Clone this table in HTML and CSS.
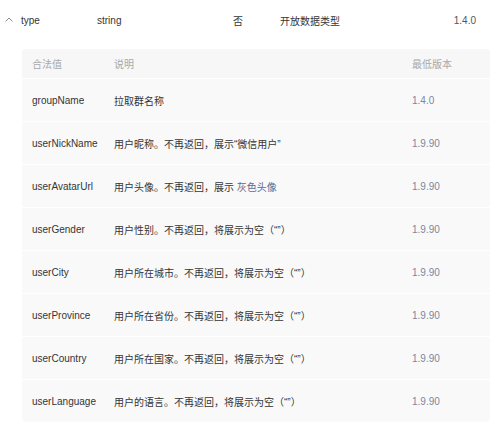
FILE: index.html
```html
<!DOCTYPE html>
<html lang="zh">
<head>
<meta charset="utf-8">
<link rel="stylesheet" href="styles.css">
</head>
<body>
<div class="field">
  <span class="chev"><svg width="8" height="5" viewBox="0 0 8 5"><path d="M0.5 4.5 L4 1 L7.5 4.5" fill="none" stroke="#8a8a8a" stroke-width="1"/></svg></span>
  <span class="name">type</span>
  <span class="ftype">string</span>
  <span class="req">否</span>
  <span class="fdesc">开放数据类型</span>
  <span class="fver">1.4.0</span>
</div>
<div class="panel">
  <div class="row head"><span>合法值</span><span>说明</span><span>最低版本</span></div>
  <div class="row"><span>groupName</span><span>拉取群名称</span><span class="ver">1.4.0</span></div>
  <div class="row"><span>userNickName</span><span>用户昵称。不再返回，展示“微信用户”</span><span class="ver">1.9.90</span></div>
  <div class="row"><span>userAvatarUrl</span><span>用户头像。不再返回，展示 <a class="link">灰色头像</a></span><span class="ver">1.9.90</span></div>
  <div class="row"><span>userGender</span><span>用户性别。不再返回，将展示为空（“”）</span><span class="ver">1.9.90</span></div>
  <div class="row"><span>userCity</span><span>用户所在城市。不再返回，将展示为空（“”）</span><span class="ver">1.9.90</span></div>
  <div class="row"><span>userProvince</span><span>用户所在省份。不再返回，将展示为空（“”）</span><span class="ver">1.9.90</span></div>
  <div class="row"><span>userCountry</span><span>用户所在国家。不再返回，将展示为空（“”）</span><span class="ver">1.9.90</span></div>
  <div class="row"><span>userLanguage</span><span>用户的语言。不再返回，将展示为空（“”）</span><span class="ver">1.9.90</span></div>
</div>
</body>
</html>
```
FILE: styles.css
```css
html, body {
  margin: 0;
  padding: 0;
  background: #ffffff;
}
body {
  font-family: "Liberation Sans", "Noto Sans CJK SC", sans-serif;
  font-size: 10px;
  color: #353535;
  width: 499px;
}
.field {
  display: grid;
  grid-template-columns: 21px 76px 136px 47px 1fr auto;
  align-items: center;
  height: 40px;
  padding-right: 23px;
}
.chev {
  display: flex;
  justify-content: flex-end;
  padding-right: 8px;
  padding-bottom: 2px;
}
.fver {
  color: #555;
}
.panel {
  margin: 9px 9px 0 22px;
  background: #f9f9fa;
  border-radius: 4px;
  overflow: hidden;
}
.row {
  display: grid;
  grid-template-columns: 82px 298px 1fr;
  align-items: center;
  height: 42px;
  padding-left: 10px;
  border-top: 1px solid #ffffff;
}
.row.head {
  height: 29px;
  border-top: none;
  color: #a8a8a8;
  background: #f7f7f8;
}
.ver {
  color: #7b86a0;
}
.link {
  color: #576b95;
}
```
